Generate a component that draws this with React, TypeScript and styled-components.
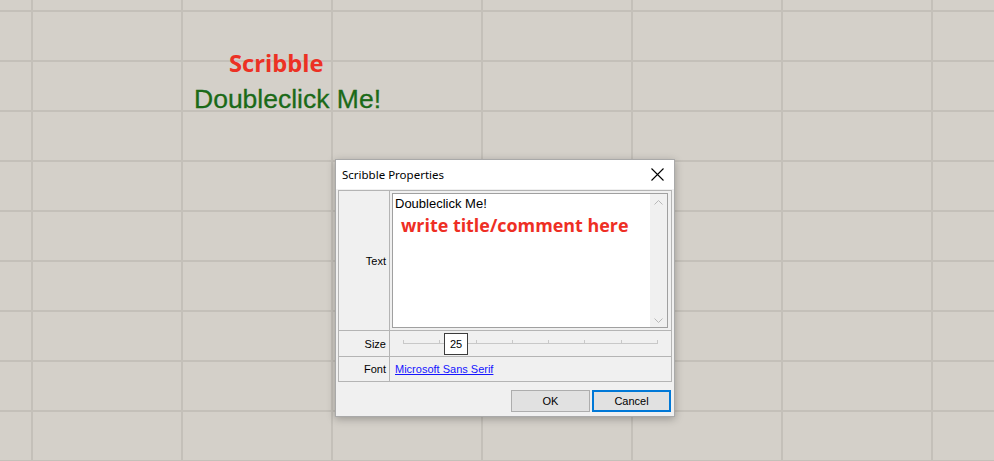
import React from 'react';
import styled, { createGlobalStyle } from 'styled-components';

const GlobalStyle = createGlobalStyle`
  html, body {
    margin: 0;
    padding: 0;
    background: #d4d0c9;
  }
  * {
    box-sizing: border-box;
  }
`;

const Canvas = styled.div`
  position: relative;
  width: 994px;
  height: 461px;
  overflow: hidden;
  background-color: #d4d0c9;
  background-image:
    linear-gradient(to right, #c4c0b9 2px, transparent 2px),
    linear-gradient(to bottom, #c4c0b9 2px, transparent 2px);
  background-size: 150px 100%, 100% 50px;
  background-position: 31px 0, 0 10px;
`;

const CanvasLabel = styled.div<{ $x: number; $y: number }>`
  position: absolute;
  left: ${p => p.$x}px;
  top: ${p => p.$y}px;
  white-space: nowrap;
`;

const ScribbleTitle = styled(CanvasLabel)`
  font-family: 'Open Sans', 'Noto Sans', sans-serif;
  font-weight: 700;
  font-size: 23.7px;
  line-height: 30px;
  color: #ec3124;
`;

const ScribbleText = styled(CanvasLabel)`
  font-family: 'Liberation Sans', Arial, sans-serif;
  font-size: 26.5px;
  line-height: 30px;
  color: #1b6a18;
  -webkit-text-stroke: 0.3px #1b6a18;
`;

const Dialog = styled.div`
  position: absolute;
  left: 335px;
  top: 159px;
  width: 340px;
  height: 258px;
  background: #f0f0f0;
  border: 1px solid #a9a9a9;
  box-shadow: 0 2px 8px rgba(0, 0, 0, 0.28);
  display: flex;
  flex-direction: column;
`;

const TitleBar = styled.div`
  height: 29px;
  background: #ffffff;
  display: flex;
  align-items: center;
  justify-content: space-between;
  padding: 0 10px 0 6px;
  font-family: 'Noto Sans', 'Open Sans', sans-serif;
  font-size: 11.5px;
  color: #000;
`;

const CloseButton = styled.button`
  border: none;
  background: none;
  padding: 0;
  width: 14px;
  height: 14px;
  display: flex;
  align-items: center;
  justify-content: center;
  cursor: pointer;
`;

const Body = styled.div`
  flex: 1;
  display: flex;
  flex-direction: column;
  padding: 1px 2px 4px 2px;
`;

const PropGrid = styled.div`
  display: grid;
  grid-template-columns: 51px 1fr;
  grid-template-rows: 140px 26px 25px;
  border: 1px solid #b4b4b4;
  border-bottom: none;
  font-family: 'Liberation Sans', Arial, sans-serif;
  font-size: 11px;
  color: #000;
`;

const Label = styled.div`
  display: flex;
  align-items: center;
  justify-content: flex-end;
  padding-right: 3px;
  border-right: 1px solid #b4b4b4;
  border-bottom: 1px solid #b4b4b4;
`;

const Cell = styled.div`
  display: flex;
  align-items: center;
  border-bottom: 1px solid #b4b4b4;
  min-width: 0;
`;

const TextCell = styled(Cell)`
  padding: 2px 3px 2px 2px;
  align-items: stretch;
`;

const TextBox = styled.div`
  flex: 1;
  display: flex;
  background: #fff;
  border: 1px solid #a0a0a0;
`;

const TextContent = styled.div`
  flex: 1;
  padding: 2px 2px;
  font-family: 'Liberation Sans', Arial, sans-serif;
  font-size: 13px;
  line-height: 15px;
`;

const Annotation = styled.div`
  margin: 3px 0 0 6px;
  font-family: 'Open Sans', 'Noto Sans', sans-serif;
  font-weight: 700;
  font-size: 17.9px;
  line-height: 22px;
  color: #ee2e24;
  white-space: nowrap;
`;

const ScrollBar = styled.div`
  width: 17px;
  background: #f0f0f0;
  display: flex;
  flex-direction: column;
  justify-content: space-between;
  align-items: center;
  padding: 6px 0 4px;
`;

const SliderCell = styled(Cell)`
  padding: 0 13px 0 13px;
`;

const Track = styled.div`
  position: relative;
  flex: 1;
  height: 22px;
  display: flex;
  align-items: center;
`;

const TrackLine = styled.div`
  flex: 1;
  height: 1px;
  background: #c8c8c8;
  display: flex;
  justify-content: space-between;
  align-items: flex-end;
`;

const Tick = styled.span`
  width: 1px;
  height: 4px;
  background: #c8c8c8;
`;

const Thumb = styled.div`
  position: absolute;
  top: 0;
  width: 24px;
  height: 22px;
  background: #fff;
  border: 1px solid #3c3c3c;
  display: flex;
  align-items: center;
  justify-content: center;
  font-size: 11px;
  color: #000;
`;

const FontLink = styled.a`
  margin-left: 5px;
  color: #1515ff;
  text-decoration: underline;
  cursor: pointer;
`;

const ButtonRow = styled.div`
  margin-top: auto;
  display: flex;
  justify-content: flex-end;
  gap: 2px;
  padding-right: 1px;
`;

const DialogButton = styled.button<{ $default?: boolean }>`
  width: 79px;
  height: 22px;
  background: #e1e1e1;
  border: 1px solid ${p => (p.$default ? '#0078d7' : '#adadad')};
  box-shadow: ${p => (p.$default ? 'inset 0 0 0 1px #0078d7' : 'none')};
  font-family: 'Liberation Sans', Arial, sans-serif;
  font-size: 11px;
  color: #000;
  padding: 0;
  cursor: pointer;
`;

const Chevron = ({ up }: { up?: boolean }) => (
  <svg width="9" height="5" viewBox="0 0 9 5">
    <path
      d={up ? 'M0.5 4.5 L4.5 0.5 L8.5 4.5' : 'M0.5 0.5 L4.5 4.5 L8.5 0.5'}
      fill="none"
      stroke="#b8b8b8"
      strokeWidth="1"
    />
  </svg>
);

// slider: 8 ticks, value 25 sits just past the second tick
const SIZE_VALUE = 25;
const THUMB_LEFT = 41;

const App: React.FC = () => {
  const ticks = Array.from({ length: 8 });

  return (
    <>
      <GlobalStyle />
      <Canvas>
        <ScribbleTitle $x={229} $y={48}>Scribble</ScribbleTitle>
        <ScribbleText $x={194} $y={84}>Doubleclick Me!</ScribbleText>

        <Dialog>
          <TitleBar>
            <span>Scribble Properties</span>
            <CloseButton>
              <svg width="13" height="13" viewBox="0 0 13 13">
                <path d="M0.5 0.5 L12.5 12.5 M12.5 0.5 L0.5 12.5" stroke="#000" strokeWidth="1.1" />
              </svg>
            </CloseButton>
          </TitleBar>

          <Body>
            <PropGrid>
              <Label>Text</Label>
              <TextCell>
                <TextBox>
                  <TextContent>
                    Doubleclick Me!
                    <Annotation>write title/comment here</Annotation>
                  </TextContent>
                  <ScrollBar>
                    <Chevron up />
                    <Chevron />
                  </ScrollBar>
                </TextBox>
              </TextCell>

              <Label>Size</Label>
              <SliderCell>
                <Track>
                  <TrackLine>
                    {ticks.map((_, i) => (
                      <Tick key={i} />
                    ))}
                  </TrackLine>
                  <Thumb style={{ left: THUMB_LEFT }}>{SIZE_VALUE}</Thumb>
                </Track>
              </SliderCell>

              <Label>Font</Label>
              <Cell>
                <FontLink>Microsoft Sans Serif</FontLink>
              </Cell>
            </PropGrid>

            <ButtonRow>
              <DialogButton>OK</DialogButton>
              <DialogButton $default>Cancel</DialogButton>
            </ButtonRow>
          </Body>
        </Dialog>
      </Canvas>
    </>
  );
};

export default App;
